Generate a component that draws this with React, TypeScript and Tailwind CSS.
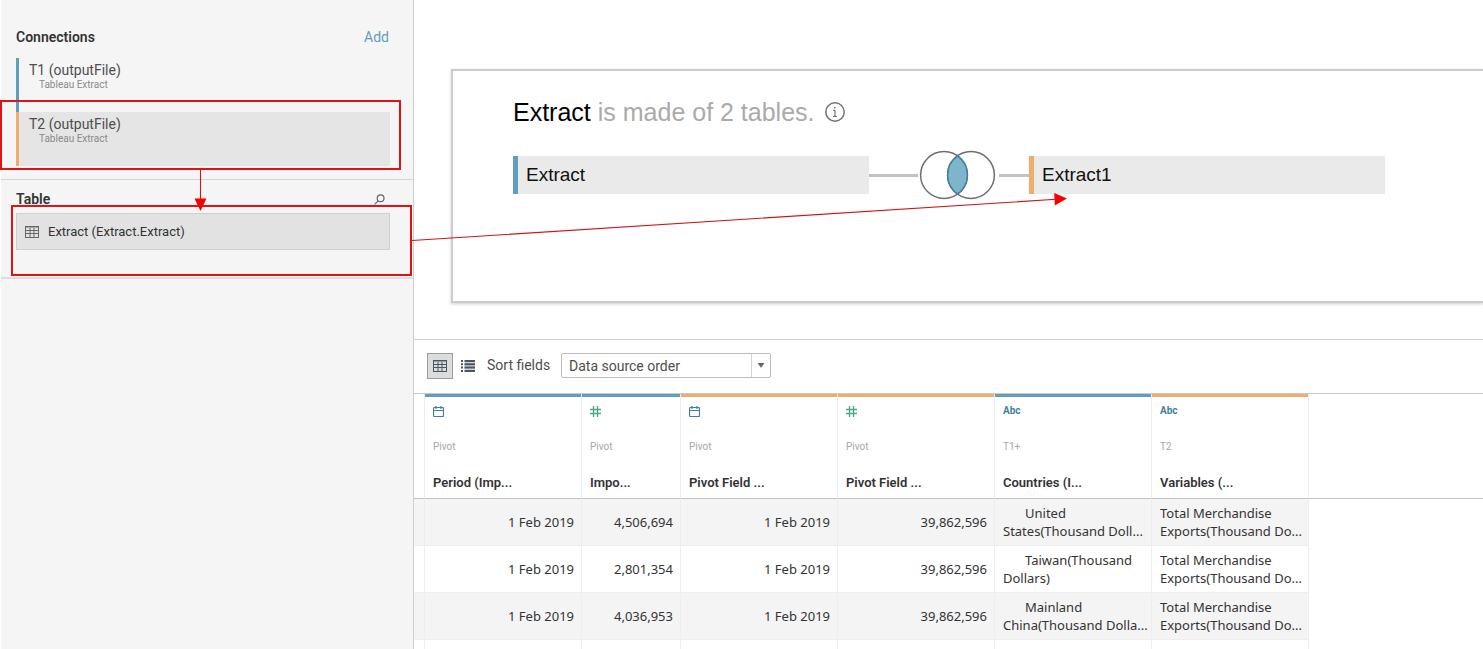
import React from "react";

type FieldKind = "date" | "number" | "text";

interface Field {
  kind: FieldKind;
  source: string;
  name: string;
  bar: string;
}

const BLUE = "bg-[#5f9ebd]";
const ORANGE = "bg-[#f2ab6d]";

const fields: Field[] = [
  { kind: "date", source: "Pivot", name: "Period (Imp...", bar: BLUE },
  { kind: "number", source: "Pivot", name: "Impo...", bar: BLUE },
  { kind: "date", source: "Pivot", name: "Pivot Field ...", bar: ORANGE },
  { kind: "number", source: "Pivot", name: "Pivot Field ...", bar: ORANGE },
  { kind: "text", source: "T1+", name: "Countries (I...", bar: BLUE },
  { kind: "text", source: "T2", name: "Variables (...", bar: ORANGE },
];

const exportsText = "Total Merchandise\nExports(Thousand Do...";

const rows = [
  ["1 Feb 2019", "4,506,694", "1 Feb 2019", "39,862,596", "United\nStates(Thousand Doll...", exportsText],
  ["1 Feb 2019", "2,801,354", "1 Feb 2019", "39,862,596", "Taiwan(Thousand\nDollars)", exportsText],
  ["1 Feb 2019", "4,036,953", "1 Feb 2019", "39,862,596", "Mainland\nChina(Thousand Dolla...", exportsText],
  ["", "", "", "", "", ""],
];

function GridIcon({ className }: { className: string }) {
  return (
    <svg className={className} width="14" height="12" viewBox="0 0 14 12" fill="none" stroke="currentColor" aria-hidden="true">
      <rect x="0.5" y="0.5" width="13" height="11" />
      <path d="M0 1.5h14" strokeWidth="1" opacity="0.5" />
      <path d="M0 4.5h14M0 7.5h14M5 2v10M9 2v10" />
    </svg>
  );
}

function ListIcon() {
  return (
    <svg width="14" height="12" viewBox="0 0 14 12" className="text-[#4b5563]" fill="currentColor" aria-hidden="true">
      <path d="M0 0h2v2H0zM0 3.3h2v2H0zM0 6.6h2v2H0zM0 10h2v2H0zM3.5 0H14v2H3.5zM3.5 3.3H14v2H3.5zM3.5 6.6H14v2H3.5zM3.5 10H14v2H3.5z" />
      <path d="M3.5 2H14v8H3.5z" opacity="0.25" />
    </svg>
  );
}

function KindIcon({ kind }: { kind: FieldKind }) {
  if (kind === "date") {
    return (
      <svg width="11" height="11" viewBox="0 0 11 11" fill="none" stroke="#3f7f9f" aria-label="Date">
        <rect x="0.5" y="1.5" width="10" height="9" rx="1" strokeWidth="1.2" />
        <path d="M0.5 4.5h10M3 0v3M8 0v3" strokeWidth="1.2" />
      </svg>
    );
  }
  if (kind === "number") {
    return (
      <svg width="11" height="11" viewBox="0 0 11 11" fill="none" stroke="#45a884" strokeWidth="1.3" aria-label="Number">
        <path d="M3.5 0v11M7.5 0v11M0 3.5h11M0 7.5h11" />
      </svg>
    );
  }
  return <span className="text-[10px] leading-3 font-bold text-[#3f7f9f]">Abc</span>;
}

function Connection({ name, bar, selected }: { name: string; bar: string; selected?: boolean }) {
  return (
    <li className={`flex h-[54px] ${selected ? "bg-[#e5e5e5]" : ""}`}>
      <span className={`w-[3px] ${bar}`} />
      <div className="pt-1 pl-[10px]">
        <div className="text-[14px] leading-4 text-[#4e4e4e]">{name}</div>
        <div className="pl-[10px] text-[10px] leading-[14px] text-[#8a8a8a]">Tableau Extract</div>
      </div>
    </li>
  );
}

function Sidebar() {
  return (
    <aside className="w-[414px] shrink-0 border-r border-l border-r-[#cfcfcf] border-l-white bg-[#f5f5f5] font-['Roboto',sans-serif]">
      <section className="border-b border-[#d4d4d4] px-[15px] pt-7 pb-[13px]">
        <div className="flex items-center justify-between pr-2">
          <h2 className="text-[14px] leading-[18px] font-semibold text-[#333]">Connections</h2>
          <a href="#add" className="pr-[1px] text-[14px] leading-[18px] text-[#5f9ebd]">Add</a>
        </div>
        <ul className="mt-3 mr-2">
          <Connection name="T1 (outputFile)" bar={BLUE} />
          <Connection name="T2 (outputFile)" bar={ORANGE} selected />
        </ul>
      </section>
      <section className="border-b-2 border-[#dedede] px-[15px] pt-[10px] pb-[27px]">
        <div className="flex items-center justify-between pr-[13px]">
          <h2 className="text-[14px] leading-[18px] font-semibold text-[#333]">Table</h2>
          <button type="button" aria-label="Search tables">
            <svg width="11" height="11" viewBox="0 0 11 11" fill="none" stroke="#666" strokeWidth="1.2" aria-hidden="true">
              <circle cx="6.6" cy="4.2" r="3.4" />
              <path d="M4.2 6.8L0.6 10.4" />
            </svg>
          </button>
        </div>
        <div className="mt-[5px] mr-2 flex h-[37px] items-center gap-[9px] border border-[#cfcfcf] bg-[#e2e2e2] pl-2">
          <GridIcon className="text-[#666]" />
          <span className="text-[13px] leading-4 text-[#333]">Extract (Extract.Extract)</span>
        </div>
      </section>
    </aside>
  );
}

function TableNode({ name, bar }: { name: string; bar: string }) {
  return (
    <div className="flex h-[38px] w-[356px] shrink-0 items-center bg-[#eaeaea]">
      <span className={`h-full w-[5px] ${bar}`} />
      <span className="pl-2 text-[19px] leading-6 text-[#111]">{name}</span>
    </div>
  );
}

function JoinIcon() {
  return (
    <svg width="78" height="50" viewBox="0 0 78 50" fill="none" aria-label="Inner join">
      <g stroke="#6e6e6e" strokeWidth="1.5">
        <circle cx="25" cy="25" r="23.4" />
        <circle cx="52" cy="25" r="23.4" />
      </g>
      <path d="M38.5 5.9a23.4 23.4 0 0 1 0 38.2a23.4 23.4 0 0 1 0 -38.2z" fill="#7fb5ca" stroke="#3f7f9a" strokeWidth="1.5" />
    </svg>
  );
}

function JoinCanvas() {
  return (
    <section className="overflow-hidden border-b border-[#cfcfcf] pt-[69px] pb-9 pl-[37px]">
      <div className="h-[234px] border-2 border-r-0 border-[#cccccc] pt-[25px] pl-[60px] font-['Liberation_Sans',Arial,sans-serif] shadow-[0_1px_3px_rgba(0,0,0,0.2)]">
        <div className="flex items-center gap-[10px]">
          <h1 className="text-[25px] leading-8 text-[#aaa]">
            <span className="text-black">Extract</span> is made of 2 tables.
          </h1>
          <svg width="20" height="20" viewBox="0 0 20 20" fill="none" stroke="#737373" aria-label="Information">
            <circle cx="10" cy="10" r="9.2" strokeWidth="1.5" />
            <path d="M10 8.4v6M8.2 8.4H10M8 14.5h4" strokeWidth="1.2" />
            <circle cx="9.8" cy="5.6" r="0.9" fill="#737373" stroke="none" />
          </svg>
        </div>
        <div className="mt-[22px] flex items-center">
          <TableNode name="Extract" bar={BLUE} />
          <span className="h-[3px] w-[49px] shrink-0 bg-[#c2c2c2]" />
          <span className="mr-[2px] ml-px shrink-0">
            <JoinIcon />
          </span>
          <span className="h-[3px] w-[30px] shrink-0 bg-[#c2c2c2]" />
          <TableNode name="Extract1" bar={ORANGE} />
        </div>
      </div>
    </section>
  );
}

function Toolbar() {
  return (
    <div className="flex h-[54px] items-center border-b border-[#c8c8c8] pb-[2px] pl-[13px] font-['Roboto',sans-serif] text-[14px] text-[#4e4e4e]">
      <button type="button" aria-label="Grid view" className="grid h-[26px] w-[26px] place-items-center border border-[#9c9c9c] bg-[#dcdcdc]">
        <GridIcon className="text-[#4b5563]" />
      </button>
      <button type="button" aria-label="List view" className="ml-2">
        <ListIcon />
      </button>
      <label htmlFor="sort" className="ml-3 w-[74px]">Sort fields</label>
      <div className="relative">
        <select id="sort" className="block h-[25px] w-[210px] appearance-none rounded-[2px] border border-[#bdbdbd] bg-white pl-[7px] leading-5 text-[#4e4e4e]">
          <option>Data source order</option>
        </select>
        <span className="pointer-events-none absolute inset-y-px right-px grid w-[19px] place-items-center border-l border-[#d4d4d4]">
          <svg width="8" height="5" viewBox="0 0 8 5" fill="#666" aria-hidden="true">
            <path d="M0.5 0h7L4 4.8z" />
          </svg>
        </span>
      </div>
    </div>
  );
}

function DataGrid() {
  return (
    <table className="w-full table-fixed border-separate border-spacing-0 text-[#333]">
      <colgroup>
        <col className="w-[11px]" />
        <col className="w-[157px]" />
        <col className="w-[99px]" />
        <col className="w-[157px]" />
        <col className="w-[157px]" />
        <col className="w-[157px]" />
        <col className="w-[157px]" />
        <col />
      </colgroup>
      <thead className="font-['Roboto',sans-serif]">
        <tr>
          <td className="border-r border-b border-r-[#ececec] border-b-[#c0c4c2]" />
          {fields.map((f, i) => (
            <th key={i} scope="col" className="border-r border-b border-r-[#ececec] border-b-[#c0c4c2] p-0 text-left align-top font-normal">
              <div className={`h-[3px] ${f.bar}`} />
              <div className="flex h-[101px] flex-col pt-2 pl-2">
                <div className="flex h-3 items-center">
                  <KindIcon kind={f.kind} />
                </div>
                <div className="mt-6 text-[10px] leading-3 text-[#a6a6a6]">{f.source}</div>
                <div className="mt-[22px] text-[13px] leading-4 font-semibold">{f.name}</div>
              </div>
            </th>
          ))}
          <td className="border-b border-[#c0c4c2]" />
        </tr>
      </thead>
      <tbody className="font-['Noto_Sans',sans-serif] text-[13px] leading-[18px]">
        {rows.map((row, r) => {
          const shade = r % 2 === 0 ? "bg-[#f4f4f4]" : "bg-white";
          return (
            <tr key={r} className="h-[47px]">
              <td className={`border-r border-b border-[#eeeeee] ${shade}`} />
              {row.map((value, c) => (
                <td
                  key={c}
                  className={`border-r border-b border-[#eeeeee] py-0 pl-2 whitespace-pre ${shade} ${c < 4 ? "pr-[7px] text-right" : ""} ${c === 4 ? "indent-[22px]" : ""}`}
                >
                  {c < 4
                    ? value
                    : value.split("\n").map((line, n) => (
                        <span key={n} className={n === 0 ? "block" : "block indent-0"}>
                          {line}
                        </span>
                      ))}
                </td>
              ))}
              <td />
            </tr>
          );
        })}
      </tbody>
    </table>
  );
}

function Annotations() {
  return (
    <svg className="pointer-events-none absolute top-0 left-0" width="1100" height="300" viewBox="0 0 1100 300" fill="none" aria-hidden="true">
      <g stroke="#e01212" strokeWidth="2">
        <rect x="1" y="101" width="399" height="68" />
        <rect x="12" y="206" width="399" height="69" />
      </g>
      <path d="M200.5 170v30M412 240.5L1056 199.3" stroke="#d01515" strokeWidth="1.1" />
      <path d="M194.5 198.5h12l-6 12.5zM1054.2 193l12.8 5.4l-12.2 7z" fill="#f80000" />
    </svg>
  );
}

export default function App() {
  return (
    <div className="relative flex h-screen overflow-hidden bg-white">
      <Sidebar />
      <main className="min-w-0 flex-1">
        <JoinCanvas />
        <Toolbar />
        <DataGrid />
      </main>
      <Annotations />
    </div>
  );
}
